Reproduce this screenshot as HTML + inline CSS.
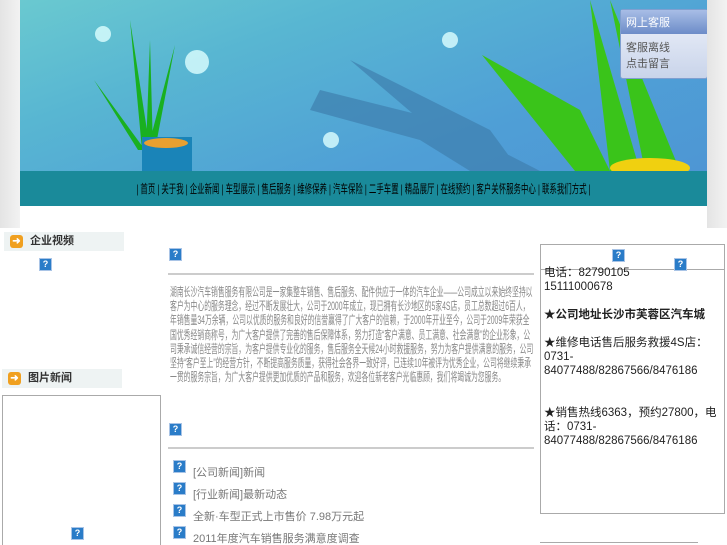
<!DOCTYPE html>
<html><head><meta charset="utf-8"><style>
*{margin:0;padding:0;box-sizing:border-box}
html,body{width:727px;height:545px;overflow:hidden}
body{background:#fff;font-family:"Liberation Sans","Noto Sans CJK SC",sans-serif;position:relative}
.side{position:absolute;top:0;width:20px;height:228px;background:linear-gradient(90deg,#e4e4e4,#f2f2f2)}
.banner{position:absolute;left:20px;top:0;width:687px;height:171px;background:linear-gradient(160deg,#6ac9d0 0%,#58b6d2 30%,#4f9fd6 70%,#4e96d4 100%);overflow:hidden}
.nav{position:absolute;left:20px;top:171px;width:687px;height:35px;background:#1a8a9a}
.nav span{position:absolute;left:-40px;top:0;width:767px;text-align:center;line-height:37px;font-size:12px;color:#000;white-space:nowrap;transform:scaleX(.62);transform-origin:center}
.q{position:absolute;width:13px;height:13px;background:#2a7cc8;border:1px solid #a9c4e6;color:#fff;font-size:9px;font-weight:bold;text-align:center;line-height:11px}
.t{position:absolute;font-size:11px;color:#777;line-height:14.2px}
.hdr{position:absolute;background:#eef3f3;height:19px;font-size:11px;font-weight:bold;color:#333;line-height:19px;padding-left:26px}
.hdr i{position:absolute;left:6px;top:3px;width:13px;height:13px;border-radius:3px;background:#f0a020;color:#fff;font-style:normal;font-size:10px;line-height:13px;text-align:center}
.para{position:absolute;left:170px;top:285px;width:640px;height:114px;overflow:hidden;font-size:12px;color:#888;line-height:14.2px;transform:scaleX(.57);transform-origin:0 0}
</style></head><body>
<div class="side" style="left:0"></div><div class="side" style="left:707px"></div>
<div class="banner">
<svg width="687" height="171" style="position:absolute;left:0;top:0">
<path d="M300 90 L420 120 L520 171 L450 171 L400 140 L290 110 Z M330 60 L470 130 L500 171 L460 171 Z" fill="#3f7fae" opacity=".7"/>
<circle cx="83" cy="34" r="8" fill="#dff" opacity=".8"/><circle cx="177" cy="62" r="12" fill="#dff" opacity=".8"/><circle cx="311" cy="140" r="8" fill="#dff" opacity=".8"/><circle cx="430" cy="40" r="8" fill="#dff" opacity=".8"/>
<path d="M74 80 L125 150 L118 150 Z M110 20 L130 150 L122 150 Z M130 40 L133 150 L126 150Z M155 45 L135 150 L128 148Z" fill="#19b020"/>
<rect x="122" y="137" width="50" height="34" fill="#1a84b8"/><ellipse cx="146" cy="143" rx="22" ry="5" fill="#e8a030"/>
<path d="M462 55 L560 110 L590 171 L555 171 Z M570 0 L620 171 L590 171 Z M590 0 L660 171 L625 171Z" fill="#3ac41a"/>
<ellipse cx="630" cy="168" rx="40" ry="10" fill="#f0d010"/>
</svg>
<div style="position:absolute;left:600px;top:9px;width:88px;height:70px;border:1px solid #7f9fd0;border-radius:3px;background:linear-gradient(#eef2fb,#c9d4ea);font-size:11px;color:#555">
<div style="height:24px;background:linear-gradient(#a8bde6,#6c8cc8);color:#fff;padding:4px 0 0 5px">网上客服</div>
<div style="padding:6px 0 0 5px;line-height:16px">客服离线<br>点击留言</div></div>
</div>
<div class="nav"><span>| 首页 | 关于我 | 企业新闻 | 车型展示 | 售后服务 | 维修保养 | 汽车保险 | 二手车置 | 精品展厅 | 在线预约 | 客户关怀服务中心 | 联系我们方式 |</span></div>

<div class="hdr" style="left:4px;top:232px;width:120px"><i>➜</i>企业视频</div>
<div class="q" style="left:39px;top:258px">?</div>
<div class="hdr" style="left:2px;top:369px;width:120px"><i>➜</i>图片新闻</div>
<div style="position:absolute;left:2px;top:395px;width:159px;height:160px;border:1px solid #aaa"></div>
<div class="q" style="left:71px;top:527px">?</div>

<div class="q" style="left:169px;top:248px">?</div>
<div style="position:absolute;left:168px;top:273px;width:366px;border-top:2px solid #ccc"></div>
<div class="para">湖南长沙汽车销售服务有限公司是一家集整车销售、售后服务、配件供应于一体的汽车企业——公司成立以来始终坚持以客户为中心的服务理念，经过不断发展壮大，公司于2000年成立，现已拥有长沙地区的5家4S店，员工总数超过6百人，年销售量34万余辆，公司以优质的服务和良好的信誉赢得了广大客户的信赖，于2000年开业至今，公司于2009年荣获全国优秀经销商称号，为广大客户提供了完善的售后保障体系，努力打造“客户满意、员工满意、社会满意”的企业形象，公司秉承诚信经营的宗旨，为客户提供专业化的服务，售后服务全天候24小时救援服务，努力为客户提供满意的服务，公司坚持“客户至上”的经营方针，不断提高服务质量，获得社会各界一致好评，已连续10年被评为优秀企业，公司将继续秉承一贯的服务宗旨，为广大客户提供更加优质的产品和服务，欢迎各位新老客户光临惠顾，我们将竭诚为您服务。</div>
<div class="q" style="left:169px;top:423px">?</div>
<div style="position:absolute;left:168px;top:447px;width:366px;border-top:2px solid #ccc"></div>
<div class="q" style="left:173px;top:460px">?</div><div class="t" style="left:193px;top:466px">[公司新闻]新闻</div>
<div class="q" style="left:173px;top:482px">?</div><div class="t" style="left:193px;top:488px">[行业新闻]最新动态</div>
<div class="q" style="left:173px;top:504px">?</div><div class="t" style="left:193px;top:510px">全新·车型正式上市售价 7.98万元起</div>
<div class="q" style="left:173px;top:526px">?</div><div class="t" style="left:193px;top:532px">2011年度汽车销售服务满意度调查</div>

<div style="position:absolute;left:540px;top:244px;width:185px;height:270px;border:1px solid #aaa"></div>
<div style="position:absolute;left:541px;top:269px;width:183px;border-top:1px solid #aaa"></div>
<div class="q" style="left:612px;top:249px">?</div><div class="q" style="left:674px;top:258px">?</div>
<div class="t" style="left:544px;top:266px;color:#222;line-height:14px;width:180px;font-size:11.5px">电话：82790105<br>15111000678<br><br><b>★公司地址长沙市芙蓉区汽车城</b><br><br>★维修电话售后服务救援4S店：0731-<br>84077488/82867566/8476186<br><br><br>★销售热线6363，预约27800，电话：0731-<br>84077488/82867566/8476186</div>
<div style="position:absolute;left:540px;top:542px;width:158px;border-top:1px solid #aaa"></div>
</body></html>
